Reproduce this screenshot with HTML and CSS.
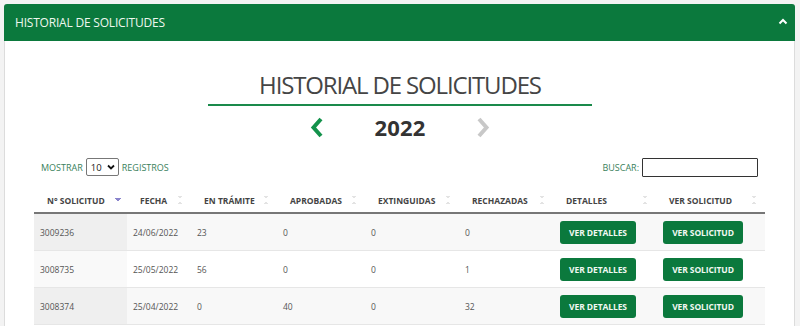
FILE: index.html
```html
<!DOCTYPE html>
<html lang="es">
<head>
<meta charset="utf-8">
<title>Historial de solicitudes</title>
<link rel="stylesheet" href="styles.css">
</head>
<body>
<div class="panel">
  <div class="panel-head">
    <span class="panel-title">HISTORIAL DE SOLICITUDES</span>
    <svg class="collapse" width="10" height="7" viewBox="0 0 10 7"><path d="M1.5 5.5 L5 2 L8.5 5.5" fill="none" stroke="#fff" stroke-width="2"/></svg>
  </div>
  <div class="panel-body">
    <h1 class="title">HISTORIAL DE SOLICITUDES</h1>
    <div class="year-nav">
      <svg class="chev" width="14" height="21" viewBox="0 0 14 21"><path d="M11 2 L3.5 10.5 L11 19" fill="none" stroke="#13924b" stroke-width="4"/></svg>
      <span class="year">2022</span>
      <svg class="chev" width="14" height="21" viewBox="0 0 14 21"><path d="M3 2 L10.5 10.5 L3 19" fill="none" stroke="#c8c8c8" stroke-width="4"/></svg>
    </div>
    <div class="controls">
      <div class="ctl">MOSTRAR
        <span class="len">10<svg width="8" height="6" viewBox="0 0 8 6"><path d="M1 1.5 L4 4.5 L7 1.5" fill="none" stroke="#111" stroke-width="1.8"/></svg></span>
        REGISTROS</div>
      <label class="ctl">BUSCAR: <input class="search" type="text"></label>
    </div>
    <table class="grid">
      <colgroup>
        <col style="width:93px"><col style="width:64px"><col style="width:86px"><col style="width:88px"><col style="width:94px"><col style="width:94px"><col style="width:103px"><col style="width:109px">
      </colgroup>
      <thead>
        <tr>
          <th class="sorted">N° SOLICITUD</th>
          <th>FECHA</th>
          <th>EN TRÁMITE</th>
          <th>APROBADAS</th>
          <th>EXTINGUIDAS</th>
          <th>RECHAZADAS</th>
          <th>DETALLES</th>
          <th>VER SOLICITUD</th>
        </tr>
      </thead>
      <tbody>
        <tr>
          <td class="s">3009236</td><td>24/06/2022</td><td>23</td><td>0</td><td>0</td><td>0</td>
          <td><span class="btn btn-a">VER DETALLES</span></td><td><span class="btn btn-b">VER SOLICITUD</span></td>
        </tr>
        <tr>
          <td class="s">3008735</td><td>25/05/2022</td><td>56</td><td>0</td><td>0</td><td>1</td>
          <td><span class="btn btn-a">VER DETALLES</span></td><td><span class="btn btn-b">VER SOLICITUD</span></td>
        </tr>
        <tr>
          <td class="s">3008374</td><td>25/04/2022</td><td>0</td><td>40</td><td>0</td><td>32</td>
          <td><span class="btn btn-a">VER DETALLES</span></td><td><span class="btn btn-b">VER SOLICITUD</span></td>
        </tr>
      </tbody>
    </table>
  </div>
</div>
</body>
</html>
```

FILE: styles.css
```css
html, body {
  margin: 0;
  padding: 0;
}
body {
  background: #f3f3f3;
  font-family: "Open Sans", "Liberation Sans", sans-serif;
  color: #333;
  height: 326px;
  overflow: hidden;
}
.panel {
  margin: 4px 5px 0 4px;
  background: #fff;
  border: 1px solid #dcdcdc;
  border-top: none;
  border-radius: 3px 3px 0 0;
  height: 330px;
}
.panel-head {
  height: 37px;
  background: #0b793d;
  border-radius: 3px 3px 0 0;
  margin: 0 -1px;
  display: flex;
  align-items: center;
  justify-content: space-between;
  padding: 0 7px 0 11px;
}
.panel-title {
  color: #eef7ef;
  font-size: 12px;
  letter-spacing: -0.2px;
}
.collapse {
  display: block;
  margin-top: -2px;
}
.panel-body {
  padding: 0 28px 0 29px;
}
.title {
  margin: 27px 0 0;
  font-size: 24px;
  font-weight: 400;
  color: #454545;
  text-align: center;
  line-height: 34px;
  letter-spacing: -1.15px;
}
.title::after {
  content: "";
  display: block;
  width: 384px;
  height: 2px;
  background: #1a8a4b;
  margin: 2px auto 0;
}
.year-nav {
  display: flex;
  justify-content: center;
  align-items: center;
  margin-top: 8px;
  height: 26px;
}
.year-nav .chev:first-child { margin-right: 50px; }
.year-nav .chev:last-child { margin-left: 50px; }
.year {
  font-size: 22px;
  font-weight: 700;
  color: #333;
  letter-spacing: 0.2px;
}
.controls {
  display: flex;
  justify-content: space-between;
  align-items: center;
  margin-top: 17px;
  padding: 0 8px 0 7px;
  height: 20px;
}
.ctl {
  font-size: 9px;
  color: #3a7f5c;
  display: flex;
  align-items: center;
  gap: 3px;
}
.len {
  display: inline-flex;
  align-items: center;
  justify-content: space-between;
  box-sizing: border-box;
  font-size: 9.5px;
  height: 18px;
  width: 33px;
  padding: 0 3px 0 4px;
  border: 1px solid #777;
  border-radius: 2px;
  background: #fff;
  color: #222;
}
.search {
  width: 112px;
  height: 15px;
  padding: 1px;
  border: 1px solid #333;
  border-radius: 1px;
  margin: 0;
}
.grid {
  width: 731px;
  margin-top: 11px;
  border-collapse: collapse;
  table-layout: fixed;
  font-size: 8.5px;
}
.grid th {
  position: relative;
  text-align: left;
  font-weight: 700;
  color: #444;
  font-size: 8.5px;
  padding: 0 0 0 13px;
  height: 24px;
  border-bottom: 2px solid #777;
}
.grid th::after {
  content: "";
  position: absolute;
  right: 9px;
  top: 8px;
  width: 4px;
  height: 8px;
  background:
    linear-gradient(to top right, transparent 50%, #e3e3e3 50%) 0 0 / 2px 3px no-repeat,
    linear-gradient(to top left, transparent 50%, #e3e3e3 50%) 2px 0 / 2px 3px no-repeat,
    linear-gradient(to bottom right, transparent 50%, #e3e3e3 50%) 0 5px / 2px 3px no-repeat,
    linear-gradient(to bottom left, transparent 50%, #e3e3e3 50%) 2px 5px / 2px 3px no-repeat;
}
.grid th.sorted::after {
  top: 10px;
  width: 6px;
  height: 4px;
  right: 6px;
  background:
    linear-gradient(to bottom right, transparent 50%, #8a84cc 50%) 0 0 / 3px 4px no-repeat,
    linear-gradient(to bottom left, transparent 50%, #8a84cc 50%) 3px 0 / 3px 4px no-repeat;
  transform: rotate(180deg);
}
.grid td {
  height: 36px;
  padding: 0 0 0 6px;
  color: #555;
  border-bottom: 1px solid #e6e6e6;
  vertical-align: middle;
}
.grid tbody tr:nth-child(odd) td { background: #f8f8f8; }
.grid tbody tr:nth-child(even) td { background: #fff; }
.grid tbody tr:nth-child(odd) td.s { background: #efefef; }
.grid tbody tr:nth-child(even) td.s { background: #f9f9f9; }
.btn {
  display: inline-block;
  height: 23px;
  line-height: 23px;
  border-radius: 3px;
  background: #0b793d;
  color: #f1f8f2;
  font-weight: 700;
  font-size: 8.5px;
  text-align: center;
  letter-spacing: -0.1px;
}
.btn-a { width: 76px; }
.btn-b { width: 80px; }
.grid td:nth-child(7) { padding-left: 7px; }
.grid td:nth-child(8) { padding-left: 7px; }
```
